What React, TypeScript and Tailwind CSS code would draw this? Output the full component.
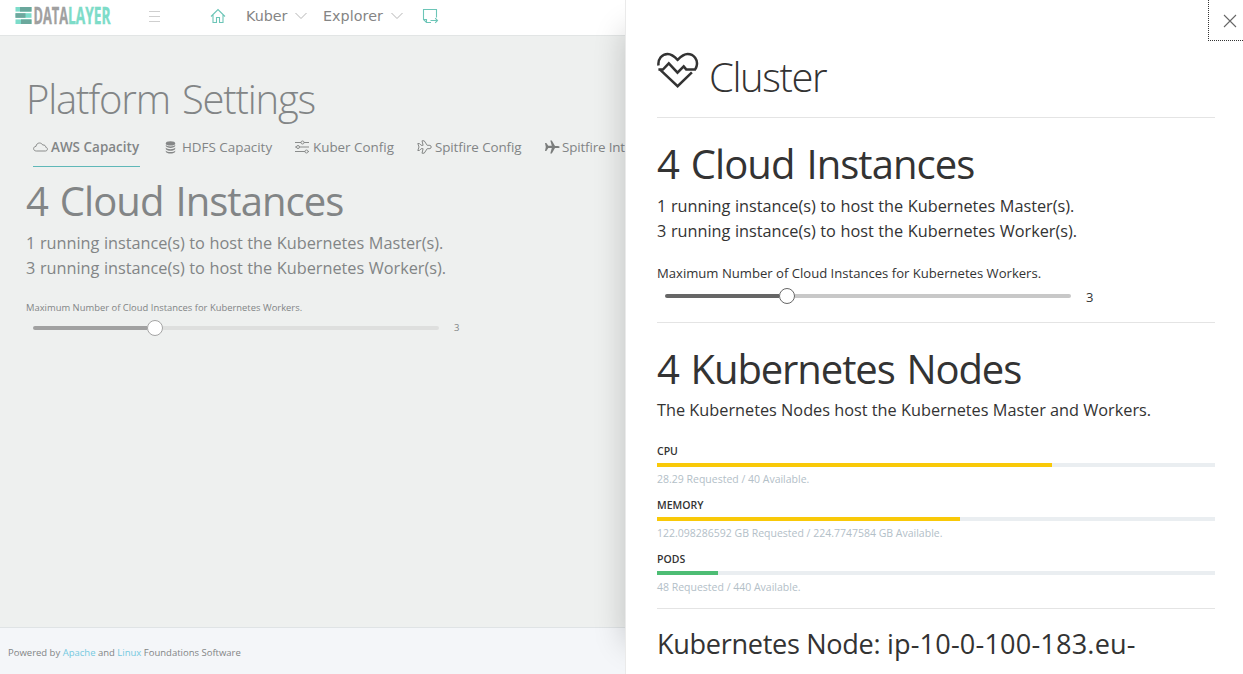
import React from 'react';

type IconProps = { className?: string };

function Logo() {
  return (
    <svg width="97" height="32" viewBox="0 -6 97 32" className="block overflow-visible">
      <g>
        <rect x="0.500" y="1" width="16" height="4.600" fill="#7ddcca" />
        <rect x="0.500" y="7.200" width="16" height="4.600" fill="#7ddcca" />
        <rect x="0.500" y="13.400" width="16" height="4.600" fill="#7ddcca" />
        <rect x="5" y="1" width="11.500" height="4.600" fill="#6aa79c" />
        <rect x="0.500" y="7.200" width="10" height="4.600" fill="#6fa79d" />
        <rect x="6" y="13.400" width="10.500" height="4.600" fill="#6ba89c" />
      </g>
      <text y="18.200" fontFamily="'Liberation Sans Narrow','Open Sans',sans-serif" fontWeight="700" fontSize="23.500" strokeWidth="0.400">
        <tspan x="18.500" fill="#a0a0a0" stroke="#a0a0a0" textLength="34.500" lengthAdjust="spacingAndGlyphs">DATA</tspan>
        <tspan x="53" fill="#7ddcc8" stroke="#7ddcc8" textLength="42.500" lengthAdjust="spacingAndGlyphs">LAYER</tspan>
      </text>
    </svg>
  );
}

function HomeIcon() {
  return (
    <svg width="16" height="16" viewBox="0 0 16 16" fill="none" stroke="#6cc5b7" strokeWidth="1.1">
      <path d="M1 8.5 8 1.5l7 7M3 7v7.5h3.5v-5h3v5H13V7" />
    </svg>
  );
}

function NoteForwardIcon() {
  return (
    <svg width="17" height="16" viewBox="0 0 17 16" fill="none" stroke="#6cc5b7" strokeWidth="1.1">
      <path d="M14.5 9.500V1.500h-13v10l3 3H9M1.500 11.500h3v3M8.500 12.500h7M13.200 10.200l2.300 2.300-2.300 2.300" />
    </svg>
  );
}

function ChevronIcon({ className }: IconProps) {
  return (
    <svg width="12" height="8" viewBox="0 0 12 8" fill="none" stroke="#b5b5b5" strokeWidth="1" className={className}>
      <path d="M.5 1 6 6.500 11.500 1" />
    </svg>
  );
}

function CloudIcon() {
  return (
    <svg width="15" height="12" viewBox="0 0 15 12" fill="none" stroke="#8a8c8b" strokeWidth="1">
      <path d="M3.300 10C1.700 10 .6 9 .6 7.700S1.600 5.400 3 5.400C3.200 3.200 4.800 2 6.500 2c1.500 0 2.600.8 3.200 2 2-.3 3 .8 3 2.200 1 .1 1.700.8 1.700 1.900 0 1.200-.9 1.900-2 1.900z" />
    </svg>
  );
}

function DatabaseIcon() {
  return (
    <svg width="11" height="13" viewBox="0 0 11 13" fill="#858787">
      <ellipse cx="5.500" cy="2.400" rx="4.700" ry="2.100" />
      <path d="M.8 3.800c1 2.200 8.400 2.200 9.400 0v1.300c-.8 2.400-8.600 2.400-9.400 0zM.8 6.600c1 2.200 8.400 2.200 9.400 0v1.300c-.8 2.400-8.600 2.400-9.400 0zM.8 9.400c1 2.200 8.400 2.200 9.400 0v1.300c-.8 2.400-8.600 2.400-9.400 0z" />
    </svg>
  );
}

function SlidersIcon() {
  return (
    <svg width="14" height="14" viewBox="0 0 14 14" fill="none" stroke="#8a8c8b" strokeWidth="1">
      <path d="M0 2.500h6M9 2.500h5M0 7h1.500M4.500 7H14M0 11.500h10M13 11.500h1" />
      <circle cx="7.500" cy="2.500" r="1.500" />
      <circle cx="3" cy="7" r="1.500" />
      <circle cx="11.500" cy="11.500" r="1.500" />
    </svg>
  );
}

function PlaneIcon({ solid }: { solid?: boolean }) {
  return (
    <svg width="15" height="14" viewBox="0 0 15 14" fill={solid ? '#7b7d7c' : 'none'} stroke={solid ? 'none' : '#858786'} strokeWidth="1">
      {solid ? (
        <path d="M0 3h1.300l2 2.800h3.500L5.300.5h1.500L10 5.900h3c2.300.4 2.300 1.800 0 2.200h-3L6.800 13.500H5.300l1.500-5.400H3.300L1.300 11H0l.8-4z" />
      ) : (
        <path d="M.8 3.500h1.600l1.700 1.800h2L5 .8h2.200l3 4.500H13c1.600.5 1.600 2.900 0 3.400h-2.800l-3 4.500H5l1.100-4.500h-2l-1.700 1.800H.8L2 7z" />
      )}
    </svg>
  );
}

function HeartIcon() {
  return (
    <svg width="42" height="38" viewBox="0 0 42 38" fill="none" stroke="#333" strokeWidth="2.500">
      <path d="M1.500 14.500C.7 8 5 2.900 10.700 2.900c3.600 0 6 1.700 9.900 5.900 4-4.200 6.400-5.900 10-5.900 6.400 0 10.700 6 9 12.200-.4 1.500-.9 2.400-1.500 3.300H29.200l-2.500-3-6.200 6.300-8.700-9.300-5.900 6.200H1.400" />
      <path d="M3 18.600 20.600 35.200 34.900 21.400" />
    </svg>
  );
}

function Slider({ left, faded }: { left: string; faded?: boolean }) {
  return (
    <div className={`flex h-5 items-center ${left}`}>
      <div className={`h-1 w-[114px] rounded-l-full ${faded ? 'bg-[#a1a1a1]' : 'bg-[#666]'}`} />
      <div className={`size-4 shrink-0 rounded-full border bg-white ${faded ? 'border-[#a4a4a4]' : 'border-[#666]'}`} />
      <div className={`h-1 w-[276px] rounded-r-full ${faded ? 'bg-[#dedfde]' : 'bg-[#c8c8c8]'}`} />
      <div className={`ml-[15px] ${faded ? 'pt-px text-[9.5px]' : 'pt-[3px] text-[13px]'}`}>3</div>
    </div>
  );
}

const metrics = [
  { name: 'CPU', fill: 'w-[395px] bg-[#f9c908]', detail: '28.29 Requested / 40 Available.' },
  { name: 'MEMORY', fill: 'w-[303px] bg-[#f9c908]', detail: '122.098286592 GB Requested / 224.7747584 GB Available.' },
  { name: 'PODS', fill: 'w-[61px] bg-[#4dbd74]', detail: '48 Requested / 440 Available.' },
];

const tabs = [
  { label: 'HDFS Capacity', icon: <DatabaseIcon />, spacing: 'ml-[25px] w-[107px] gap-[6px]' },
  { label: 'Kuber Config', icon: <SlidersIcon />, spacing: 'ml-[23px] w-[98px] gap-[4px]' },
  { label: 'Spitfire Config', icon: <PlaneIcon />, spacing: 'ml-[24px] w-[104px] gap-[3px] tracking-[-0.1px]' },
  { label: 'Spitfire Int', icon: <PlaneIcon solid />, spacing: 'ml-[24px] gap-[2px] tracking-[-0.15px]' },
];

export default function App() {
  return (
    <div className="flex h-[674px] w-[1243px] overflow-hidden bg-white font-['Open_Sans',sans-serif]">
      <div className="flex w-[625px] shrink-0 flex-col overflow-hidden bg-[#eef0ef] text-[#828586]">
        <header className="flex h-9 shrink-0 items-center border-b border-[#e2e5e5] bg-white pb-[3px] font-['DejaVu_Sans',sans-serif] text-[14.3px] text-[#858585]">
          <div className="ml-[15px] w-[97px]"><Logo /></div>
          <div className="ml-[37px] flex w-[11px] flex-col gap-1">
            <div className="h-px bg-[#cfcfcf]" />
            <div className="h-px bg-[#cfcfcf]" />
            <div className="h-px bg-[#cfcfcf]" />
          </div>
          <div className="ml-[50px] w-4"><HomeIcon /></div>
          <div className="ml-5 w-[49px] pt-0.5">Kuber</div>
          <ChevronIcon />
          <div className="ml-4 w-[68px] pt-0.5 tracking-[0.05px]">Explorer</div>
          <ChevronIcon />
          <div className="ml-[19px]"><NoteForwardIcon /></div>
        </header>

        <main className="flex-1 pl-[26px]">
          <h1 className="mt-[43px] text-[40px] leading-10 font-light tracking-[-1.2px] [word-spacing:3px]">Platform Settings</h1>
          <nav className="ml-[7px] flex h-[48px] items-start pt-[18px] text-[13.4px] leading-5 whitespace-nowrap">
            <div className="flex h-[30px] w-[107px] shrink-0 items-start gap-[3px] border-b border-[#5fb8b8] font-semibold tracking-[0.05px]">
              <span className="flex h-5 shrink-0 items-center"><CloudIcon /></span>AWS Capacity
            </div>
            {tabs.map((tab) => (
              <div key={tab.label} className={`flex shrink-0 ${tab.spacing}`}>
                <span className="flex h-5 shrink-0 items-center">{tab.icon}</span>{tab.label}
              </div>
            ))}
          </nav>
          <h2 className="mt-[14px] text-[40px] leading-10 tracking-[-0.95px] [word-spacing:2.5px]">4 Cloud Instances</h2>
          <div className="mt-[10px] text-[16.3px] leading-[25px] tracking-[-0.02px] [word-spacing:0.4px]">
            <p>1 running instance(s) to host the Kubernetes Master(s).</p>
            <p>3 running instance(s) to host the Kubernetes Worker(s).</p>
          </div>
          <p className="mt-[17px] text-[9.4px] leading-5 tracking-[0.02px]">Maximum Number of Cloud Instances for Kubernetes Workers.</p>
          <Slider left="ml-[7px]" faded />
        </main>

        <footer className="h-[47px] shrink-0 border-t border-[#dfe3e5] bg-[#f4f6f9] pt-[15px] pl-2 text-[9.5px] leading-5">
          Powered by <a className="text-[#75c9df]">Apache</a> and <a className="text-[#75c9df]">Linux</a> Foundations Software
        </footer>
      </div>

      <aside className="relative flex w-[618px] shrink-0 flex-col border-l border-[#eaeaea] bg-white pl-[31px] text-[#333] shadow-[-30px_0_30px_-30px_rgba(0,0,0,0.2)]">
        <button className="absolute top-0 right-0 flex h-[41px] w-[35px] items-center justify-center border-b border-l border-dotted border-[#333] pt-px pl-2">
          <svg width="14" height="14" viewBox="0 0 14 14" fill="none" stroke="#666" strokeWidth="1.1"><path d="m1 1 12 12M13 1 1 13" /></svg>
        </button>

        <div className="flex h-[118px] w-[558px] shrink-0 items-start border-b border-[#e4e4e4]">
          <div className="mt-[51px] w-[52px]"><HeartIcon /></div>
          <h1 className="mt-[57px] text-[40px] leading-10 font-light tracking-[-1.4px]">Cluster</h1>
        </div>

        <section className="h-[205px] w-[558px] shrink-0 border-b border-[#e4e4e4] pt-[26px]">
          <h2 className="text-[40px] leading-10 tracking-[-0.95px] [word-spacing:2.5px]">4 Cloud Instances</h2>
          <div className="mt-[10px] text-[16.3px] leading-[25px] tracking-[-0.02px] [word-spacing:0.4px]">
            <p>1 running instance(s) to host the Kubernetes Master(s).</p>
            <p>3 running instance(s) to host the Kubernetes Worker(s).</p>
          </div>
          <p className="mt-[19px] mb-[3px] text-[13.1px] leading-5">Maximum Number of Cloud Instances for Kubernetes Workers.</p>
          <Slider left="ml-2" />
        </section>

        <section className="h-[286px] w-[558px] shrink-0 border-b border-[#e4e4e4] pt-[26px]">
          <h2 className="text-[40px] leading-10 tracking-[-1.1px] [word-spacing:2.5px]">4 Kubernetes Nodes</h2>
          <p className="mt-[9px] mb-[19px] text-[16.3px] leading-[25px]">The Kubernetes Nodes host the Kubernetes Master and Workers.</p>
          {metrics.map((metric) => (
            <div key={metric.name} className="mb-2 text-[10.5px] leading-[18px]">
              <div className="font-semibold">{metric.name}</div>
              <div className="my-[3px] h-1 bg-[#eaeef1]"><div className={`h-1 ${metric.fill}`} /></div>
              <div className="text-[#b3c0c8]">{metric.detail}</div>
            </div>
          ))}
        </section>

        <h3 className="mt-[17px] text-[27.1px] leading-9 tracking-[-0.32px] whitespace-nowrap">Kubernetes Node: <span className="tracking-[0.18px]">ip-10-0-100-183.eu-</span></h3>
      </aside>
    </div>
  );
}
